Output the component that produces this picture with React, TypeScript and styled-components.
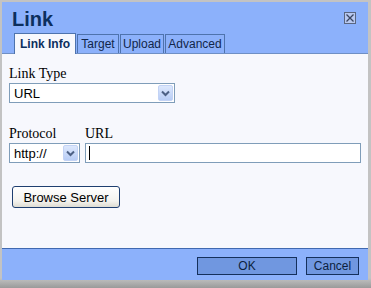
import React from 'react';
import styled, { createGlobalStyle } from 'styled-components';

const GlobalStyle = createGlobalStyle`
  html, body {
    margin: 0;
    padding: 0;
    background: #c3c3c3;
  }
`;

const Frame = styled.div`
  width: 371px;
  height: 288px;
  box-sizing: border-box;
  padding: 2px 3px 8px 2px;
  background: linear-gradient(#c3c3c3 0, #c3c3c3 278px, #9a9a9a 288px);
`;

const Dialog = styled.div`
  width: 366px;
  height: 278px;
  display: flex;
  flex-direction: column;
  background: #8cb1fb;
  font-family: "Liberation Sans", Arial, sans-serif;
`;

const Header = styled.div`
  height: 30px;
  display: flex;
  align-items: flex-start;
  justify-content: space-between;
  padding: 0 12px 0 10px;
`;

const Title = styled.div`
  font-size: 20px;
  font-weight: bold;
  color: #0c2f5e;
  line-height: 24px;
  margin-top: 5px;
`;

const CloseBox = styled.div`
  width: 10px;
  height: 10px;
  margin-top: 10px;
  border: 1px solid #5a6680;
  background: #b8c8f0;
  display: flex;
  align-items: center;
  justify-content: center;
`;

const TabRow = styled.div`
  height: 21px;
  display: flex;
  align-items: flex-end;
  padding-left: 12px;
  border-bottom: 1px solid #6f8fc4;
`;

const Tab = styled.div<{ $active?: boolean; $w: number }>`
  width: ${p => p.$w}px;
  height: ${p => (p.$active ? '21px' : '19px')};
  box-sizing: border-box;
  margin-right: 1px;
  border: 1px solid #4e73ad;
  border-bottom: none;
  background: ${p => (p.$active ? '#f7f8fd' : '#8cb1fb')};
  color: ${p => (p.$active ? '#0c2f5e' : '#11264a')};
  font-weight: ${p => (p.$active ? 'bold' : 'normal')};
  font-size: 12px;
  text-align: center;
  line-height: ${p => (p.$active ? '21px' : '18px')};
  margin-bottom: ${p => (p.$active ? '-1px' : '0')};
  position: relative;
`;

const Content = styled.div`
  flex: 1;
  background: #f7f8fd;
  padding: 12px 7px 0 7px;
  display: flex;
  flex-direction: column;
`;

const Label = styled.div`
  font-family: "Liberation Serif", "Times New Roman", serif;
  font-size: 14px;
  color: #000;
  line-height: 16px;
  height: 16px;
`;

const SelectBox = styled.div<{ $w: number }>`
  width: ${p => p.$w}px;
  height: 20px;
  box-sizing: border-box;
  border: 1px solid #7f9db9;
  background: #fff;
  display: flex;
  align-items: center;
  justify-content: space-between;
  padding: 0 1px 0 4px;
  font-size: 13px;
  color: #000;
`;

const ArrowBtn = styled.div`
  width: 15px;
  height: 16px;
  border-radius: 2px;
  background: linear-gradient(#dde8fd, #b8cdf6);
  border: 1px solid #c3d3f5;
  box-sizing: border-box;
  display: flex;
  align-items: center;
  justify-content: center;
`;

const Row = styled.div`
  display: flex;
  gap: 5px;
  margin-top: 23px;
`;

const Field = styled.div<{ $grow?: boolean }>`
  display: flex;
  flex-direction: column;
  gap: 1px;
  flex: ${p => (p.$grow ? 1 : 'none')};
`;

const TextInput = styled.div`
  height: 20px;
  box-sizing: border-box;
  border: 1px solid #7f9db9;
  background: #fff;
  display: flex;
  align-items: center;
  padding-left: 3px;
`;

const Caret = styled.div`
  width: 1px;
  height: 14px;
  background: #000;
`;

const BrowseButton = styled.div`
  width: 108px;
  height: 22px;
  box-sizing: border-box;
  margin-left: 3px;
  margin-top: 23px;
  border: 1px solid #1f3f70;
  border-radius: 3px;
  background: linear-gradient(#ffffff, #f4f3ee 70%, #dedcd2);
  font-size: 13px;
  color: #000;
  display: flex;
  align-items: center;
  justify-content: center;
`;

const Footer = styled.div`
  height: 32px;
  border-top: 1px solid #4069b0;
  display: flex;
  align-items: flex-start;
  justify-content: flex-end;
  gap: 9px;
  padding: 8px 9px 0 0;
  box-sizing: border-box;
`;

const FooterButton = styled.div<{ $w: number }>`
  width: ${p => p.$w}px;
  height: 18px;
  box-sizing: border-box;
  border: 1px solid #15305c;
  background: #7097e0;
  color: #0c1f3e;
  font-size: 12px;
  display: flex;
  align-items: center;
  justify-content: center;
`;

const Chevron = () => (
  <svg width="9" height="7" viewBox="0 0 9 7">
    <path d="M1 1.5 L4.5 5 L8 1.5" fill="none" stroke="#4d6185" strokeWidth="2" />
  </svg>
);

const App: React.FC = () => {
  return (
    <Frame>
      <GlobalStyle />
      <Dialog>
        <Header>
          <Title>Link</Title>
          <CloseBox>
            <svg width="8" height="8" viewBox="0 0 8 8">
              <path d="M0.5 0.5 L7.5 7.5 M7.5 0.5 L0.5 7.5" stroke="#3a4560" strokeWidth="1.3" />
            </svg>
          </CloseBox>
        </Header>
        <TabRow>
          <Tab $active $w={62}>Link Info</Tab>
          <Tab $w={42}>Target</Tab>
          <Tab $w={44}>Upload</Tab>
          <Tab $w={60}>Advanced</Tab>
        </TabRow>
        <Content>
          <Field>
            <Label>Link Type</Label>
            <SelectBox $w={166}>
              <span>URL</span>
              <ArrowBtn><Chevron /></ArrowBtn>
            </SelectBox>
          </Field>
          <Row>
            <Field>
              <Label>Protocol</Label>
              <SelectBox $w={71}>
                <span>http://</span>
                <ArrowBtn><Chevron /></ArrowBtn>
              </SelectBox>
            </Field>
            <Field $grow>
              <Label>URL</Label>
              <TextInput><Caret /></TextInput>
            </Field>
          </Row>
          <BrowseButton>Browse Server</BrowseButton>
        </Content>
        <Footer>
          <FooterButton $w={100}>OK</FooterButton>
          <FooterButton $w={53}>Cancel</FooterButton>
        </Footer>
      </Dialog>
    </Frame>
  );
};

export default App;
